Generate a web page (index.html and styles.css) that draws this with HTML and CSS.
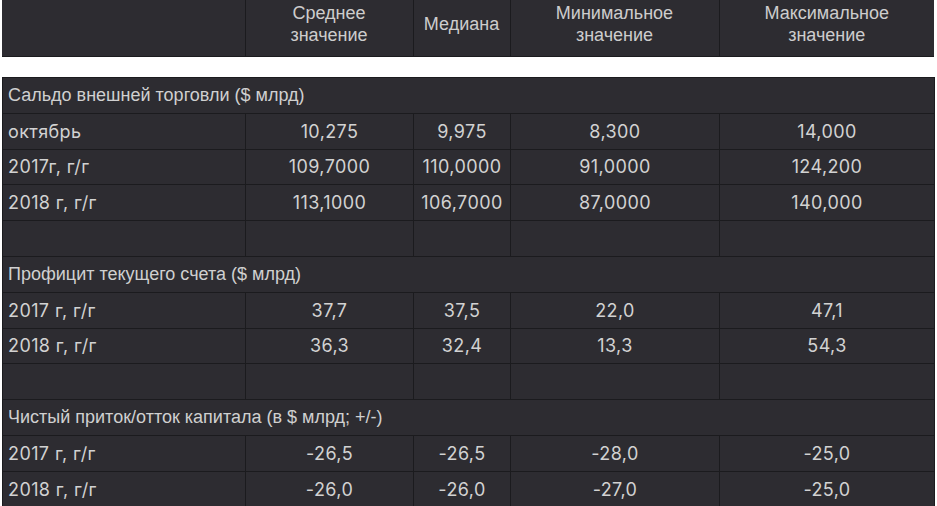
FILE: index.html
```html
<!DOCTYPE html>
<html lang="ru">
<head>
<meta charset="utf-8">
<title>Консенсус-прогноз</title>
<link rel="stylesheet" href="styles.css">
</head>
<body>
<div class="page">
  <table class="tbl head">
    <colgroup>
      <col class="c1"><col class="c2"><col class="c3"><col class="c4"><col class="c5">
    </colgroup>
    <tr>
      <th></th>
      <th>Среднее<br>значение</th>
      <th>Медиана</th>
      <th>Минимальное<br>значение</th>
      <th>Максимальное<br>значение</th>
    </tr>
  </table>
  <table class="tbl body">
    <colgroup>
      <col class="c1"><col class="c2"><col class="c3"><col class="c4"><col class="c5">
    </colgroup>
    <tr class="sec"><td colspan="5">Сальдо внешней торговли ($ млрд)</td></tr>
    <tr><td>октябрь</td><td>10,275</td><td>9,975</td><td>8,300</td><td>14,000</td></tr>
    <tr><td>2017г, г/г</td><td>109,7000</td><td>110,0000</td><td>91,0000</td><td>124,200</td></tr>
    <tr><td>2018 г, г/г</td><td>113,1000</td><td>106,7000</td><td>87,0000</td><td>140,000</td></tr>
    <tr><td></td><td></td><td></td><td></td><td></td></tr>
    <tr class="sec"><td colspan="5">Профицит текущего счета ($ млрд)</td></tr>
    <tr><td>2017 г, г/г</td><td>37,7</td><td>37,5</td><td>22,0</td><td>47,1</td></tr>
    <tr><td>2018 г, г/г</td><td>36,3</td><td>32,4</td><td>13,3</td><td>54,3</td></tr>
    <tr><td></td><td></td><td></td><td></td><td></td></tr>
    <tr class="sec"><td colspan="5">Чистый приток/отток капитала (в $ млрд; +/-)</td></tr>
    <tr><td>2017 г, г/г</td><td>-26,5</td><td>-26,5</td><td>-28,0</td><td>-25,0</td></tr>
    <tr><td>2018 г, г/г</td><td>-26,0</td><td>-26,0</td><td>-27,0</td><td>-25,0</td></tr>
  </table>
</div>
</body>
</html>
```
FILE: styles.css
```css
html, body {
  margin: 0;
  padding: 0;
  background: #ffffff;
}
.page {
  padding: 0 3px 0 2px;
}
.tbl {
  width: 932px;
  border-collapse: collapse;
  table-layout: fixed;
  background: #2d2c31;
  color: #d2d2d2;
}
.c1 { width: 243px; }
.c2 { width: 168px; }
.c3 { width: 97px; }
.c4 { width: 209px; }
.c5 { width: 215px; }
.head {
  margin-bottom: 20px;
  border-bottom: 1px solid #1b1b1e;
}
.head th {
  height: 48px;
  padding: 0 4px 8px;
  font-family: "Liberation Sans", Arial, sans-serif;
  font-weight: normal;
  font-size: 18px;
  line-height: 22px;
  text-align: center;
  vertical-align: middle;
  border-left: 1px solid #1b1b1e;
  color: #cdcdcd;
}
.head th:first-child {
  border-left: none;
}
.body td {
  height: 34.8px;
  padding: 0 5px;
  border: 1px solid #1b1b1e;
  font-family: Inter, "Noto Sans", sans-serif;
  font-size: 18px;
  letter-spacing: 0.4px;
  text-align: center;
  vertical-align: middle;
  color: #d2d2d2;
}
.body td:first-child {
  text-align: left;
}
.body tr.sec td {
  font-family: "Liberation Sans", Arial, sans-serif;
  letter-spacing: 0;
  font-size: 18px;
  text-align: left;
  color: #d0d0d0;
}
```
